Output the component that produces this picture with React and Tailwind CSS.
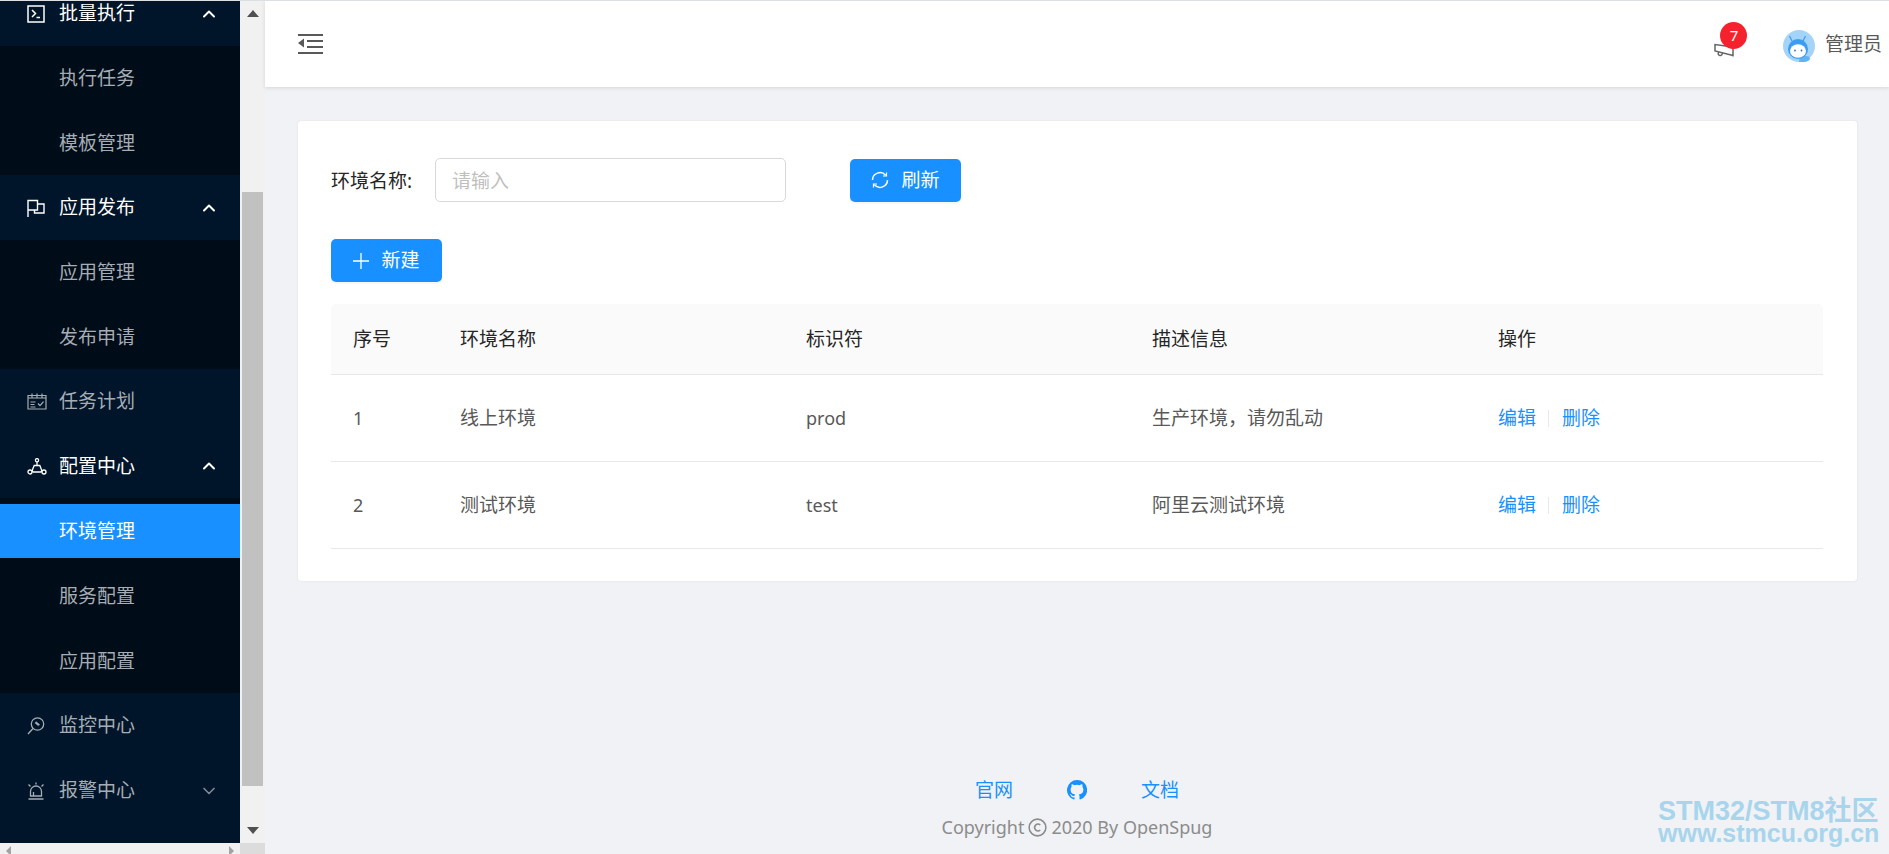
import { ChevronUp, ChevronDown } from 'lucide-react';

const font = 'font-["Noto_Sans","Noto_Sans_CJK_SC",sans-serif]';

function TerminalIcon() {
  return (
    <svg width="18" height="18" viewBox="0 0 18 18" fill="none" stroke="currentColor" strokeWidth="1.5">
      <rect x="1" y="1" width="16" height="16" />
      <path d="M5 5l3.5 3.5L5 12M9.5 12.5h3.5" />
    </svg>
  );
}

function FlagIcon() {
  return (
    <svg width="18" height="18" viewBox="0 0 18 18" fill="none" stroke="currentColor" strokeWidth="1.4">
      <path d="M1 18V1.5h9.5V11H1" />
      <path d="M10.5 5H17v9H7.5v-3" />
    </svg>
  );
}

function CalendarIcon() {
  return (
    <svg width="20" height="17" viewBox="0 0 20 17" fill="none" stroke="currentColor" strokeWidth="1.2">
      <path d="M1 2.5h18v13.5H1zM5 0.5v4M10 0.5v4M15 0.5v4M1 5h18" />
      <path d="M3.5 9h5M3.5 11.5h4M3.5 14h5M11 10.5l2 2.2 3.5-4" />
    </svg>
  );
}

function NodesIcon() {
  return (
    <svg width="20" height="17" viewBox="0 0 20 17" fill="none" stroke="currentColor" strokeWidth="1.3">
      <circle cx="10" cy="2.2" r="1.6" />
      <circle cx="3" cy="14" r="2" />
      <circle cx="17" cy="14" r="2" />
      <path d="M10 3.8V7M7.2 7.5h5.6l2 5-1 1.5H6.2l-1-1.5z" />
    </svg>
  );
}

function MonitorIcon() {
  return (
    <svg width="18" height="18" viewBox="0 0 18 18" fill="none" stroke="currentColor" strokeWidth="1.3">
      <circle cx="10.5" cy="7" r="6.2" />
      <path d="M6 11.5L1 17M8 5.5l2.5 2-.5-1.5 2.5 2" />
    </svg>
  );
}

function AlarmIcon() {
  return (
    <svg width="18" height="18" viewBox="0 0 18 18" fill="none" stroke="currentColor" strokeWidth="1.3">
      <path d="M3.5 14V9.5a5.5 5.5 0 0 1 11 0V14zM1.5 17h15M9 0.5v2M1.5 2.5L3.5 4.5M16.5 2.5L14.5 4.5M6.5 10v4" />
    </svg>
  );
}

function SubItem({ label, active }) {
  return (
    <div className={`h-[54px] flex items-center pl-[59px] ${active ? 'bg-[#1890ff] text-white' : 'text-[#a6adb4]'}`}>
      {label}
    </div>
  );
}

function MenuHead({ icon, label, open, arrow, className }) {
  return (
    <div className={`flex items-center shrink-0 ${open ? 'text-white' : 'text-[#a6adb4]'} ${className}`}>
      <span className="w-[59px] pl-[27px] flex items-center">{icon}</span>
      <span className="flex-1">{label}</span>
      {arrow === 'up' && <ChevronUp size={20} strokeWidth={2.4} className="mr-[21px]" />}
      {arrow === 'down' && <ChevronDown size={20} strokeWidth={2} className="mr-[21px] text-[#7f8a96]" />}
    </div>
  );
}

function Sidebar() {
  return (
    <div className="w-[240px] h-[842px] bg-[#001529] overflow-hidden text-[19px] flex flex-col">
      {/* list is scrolled a bit, first head is cut off at the top */}
      <MenuHead icon={<TerminalIcon />} label="批量执行" open arrow="up" className="h-[65px] mt-[-20px]" />
      <div className="bg-[#000c17] flex flex-col pt-[5px] pb-[5px] gap-[11px]">
        <SubItem label="执行任务" />
        <SubItem label="模板管理" />
      </div>
      <MenuHead icon={<FlagIcon />} label="应用发布" open arrow="up" className="h-[65px]" />
      <div className="bg-[#000c17] flex flex-col pt-[5px] pb-[5px] gap-[11px]">
        <SubItem label="应用管理" />
        <SubItem label="发布申请" />
      </div>
      <MenuHead icon={<CalendarIcon />} label="任务计划" className="h-[65px]" />
      <MenuHead icon={<NodesIcon />} label="配置中心" open arrow="up" className="h-[64px]" />
      <div className="bg-[#000c17] flex flex-col pt-[6px] pb-[5px] gap-[11px]">
        <SubItem label="环境管理" active />
        <SubItem label="服务配置" />
        <SubItem label="应用配置" />
      </div>
      <MenuHead icon={<MonitorIcon />} label="监控中心" className="h-[65px]" />
      <MenuHead icon={<AlarmIcon />} label="报警中心" arrow="down" className="h-[65px]" />
    </div>
  );
}

function VScroll() {
  return (
    <div className="w-[25px] h-[842px] bg-[#f1f1f1] flex flex-col items-center">
      <div className="h-[191px] w-full flex justify-center pt-[9px]">
        <div className="w-0 h-0 border-x-[6px] border-x-transparent border-b-[7px] border-b-[#505050]" />
      </div>
      <div className="w-[21px] h-[594px] bg-[#c1c1c1] mr-[1px]" />
      <div className="flex-1 w-full flex justify-center pt-[41px]">
        <div className="w-0 h-0 border-x-[6px] border-x-transparent border-t-[7px] border-t-[#505050]" />
      </div>
    </div>
  );
}

function HScroll() {
  return (
    <div className="h-[11px] flex">
      <div className="w-[240px] bg-[#f1f1f1] flex items-start justify-between px-[6px] pt-[3px]">
        <div className="w-0 h-0 border-y-[5px] border-y-transparent border-r-[5px] border-r-[#a3a3a3]" />
        <div className="w-0 h-0 border-y-[5px] border-y-transparent border-l-[5px] border-l-[#a3a3a3]" />
      </div>
      <div className="w-[25px] bg-[#dcdcdc]" />
    </div>
  );
}

function Header() {
  return (
    <div className="h-[86px] bg-white shadow-[0_1px_4px_rgba(0,21,41,0.12)] flex items-center pl-[33px] shrink-0 relative">
      <svg width="25" height="20" viewBox="0 0 25 20" fill="#595959">
        <rect x="0" y="0" width="25" height="2" />
        <rect x="9" y="6" width="16" height="2" />
        <rect x="9" y="12" width="16" height="2" />
        <rect x="0" y="18" width="25" height="2" />
        <path d="M6 4.5v9L0 9z" />
      </svg>
      <div className="ml-auto flex items-center">
        <div className="relative mt-[12px] mr-[49px] h-[14px]">
          <svg width="20" height="14" viewBox="0 0 20 14" fill="none" stroke="#666666" strokeWidth="1.5" className="block">
            <path d="M19 13.5V4L1 1.5v6.5l18 4.5" />
            <path d="M5 9a2 2 0 1 0 3.2 1" />
          </svg>
          <span className="absolute left-[6.5px] top-[-21px] w-[27px] h-[27px] rounded-full bg-[#f5222d] text-white text-[15px] flex items-center justify-center">7</span>
        </div>
        <svg width="32" height="32" viewBox="0 0 32 32" className="mr-[10px] mt-[4px]">
          <circle cx="16" cy="16" r="16" fill="#a5d4fb" />
          <path d="M16 32l1-6h6c2 0 4 1 4 3l-1 1.5A16 16 0 0 1 16 32z" fill="#63b3f3" />
          <path d="M9 11L6.5 6M20 11l2.5-5" stroke="#3d9cf0" strokeWidth="1.2" />
          <circle cx="15" cy="19" r="10" fill="#3d9cf0" />
          <ellipse cx="15" cy="21" rx="8" ry="6.8" fill="#ffffff" />
          <circle cx="12" cy="20.5" r="0.9" fill="#2d6fb0" />
          <circle cx="18.5" cy="20.5" r="0.9" fill="#2d6fb0" />
        </svg>
        <span className="text-[19px] text-[#595959] mr-[7px]">管理员</span>
      </div>
    </div>
  );
}

function BlueButton({ icon, label, className }) {
  return (
    <button className={`w-[111px] h-[43px] bg-[#1890ff] text-white rounded-[5px] flex items-center justify-center gap-[12px] shadow-[0_2px_0_rgba(0,0,0,0.03)] ${className}`}>
      {icon}
      {label}
    </button>
  );
}

function SyncIcon() {
  return (
    <svg width="18" height="18" viewBox="0 0 18 18" fill="none" stroke="currentColor" strokeWidth="1.5">
      <path d="M14.6 4.2A7.5 7.5 0 0 0 1.5 9M3.4 13.8A7.5 7.5 0 0 0 16.5 9" />
      <path d="M15.5 1.5v3.5h-3.5M2.5 16.5V13h3.5" strokeWidth="1.2" />
    </svg>
  );
}

function PlusIcon() {
  return (
    <svg width="16" height="16" viewBox="0 0 16 16" fill="none" stroke="currentColor" strokeWidth="1.3">
      <path d="M8 0v16M0 8h16" />
    </svg>
  );
}

const rows = [
  { id: 1, name: '线上环境', key: 'prod', desc: '生产环境，请勿乱动' },
  { id: 2, name: '测试环境', key: 'test', desc: '阿里云测试环境' },
];

function EnvTable() {
  return (
    <table className="w-full table-fixed border-collapse">
      <colgroup>
        <col className="w-[108px]" />
        <col />
        <col />
        <col />
        <col />
      </colgroup>
      <thead>
        <tr className="h-[70px] bg-[#fafafa] text-[#262626] text-left border-b border-[#e8e8e8]">
          <th className="font-normal pl-[22px] rounded-tl-[5px]">序号</th>
          <th className="font-normal pl-[21px]">环境名称</th>
          <th className="font-normal pl-[21px]">标识符</th>
          <th className="font-normal pl-[21px]">描述信息</th>
          <th className="font-normal pl-[21px] rounded-tr-[5px]">操作</th>
        </tr>
      </thead>
      <tbody>
        {rows.map((r) => (
          <tr key={r.id} className="h-[87px] text-[#595959] border-b border-[#e8e8e8]">
            <td className="pl-[22px] pt-[2px] text-[18px]">{r.id}</td>
            <td className="pl-[21px] pt-[2px]">{r.name}</td>
            <td className="pl-[21px] pt-[2px] text-[18px]">{r.key}</td>
            <td className="pl-[21px] pt-[2px]">{r.desc}</td>
            <td className="pl-[21px] pt-[1px] text-[#1890ff]">
              <div className="flex items-center">
                <span>编辑</span>
                <span className="w-px h-[17px] bg-[#e8e8e8] ml-[12px] mr-[13px]" />
                <span>删除</span>
              </div>
            </td>
          </tr>
        ))}
      </tbody>
    </table>
  );
}

function Footer() {
  return (
    <div className="flex flex-col items-center pt-[195px]">
      <div className="flex items-center text-[#1890ff] gap-[54px]">
        <span>官网</span>
        <svg width="20" height="20" viewBox="0 0 16 16" fill="currentColor">
          <path d="M8 0a8 8 0 0 0-2.53 15.59c.4.07.55-.17.55-.38v-1.34c-2.23.48-2.7-1.07-2.7-1.07-.36-.93-.89-1.17-.89-1.17-.73-.5.05-.49.05-.49.8.06 1.23.83 1.23.83.71 1.22 1.87.87 2.33.66.07-.52.28-.87.5-1.07-1.77-.2-3.64-.89-3.64-3.95 0-.87.31-1.59.82-2.15-.08-.2-.36-1.01.08-2.12 0 0 .67-.21 2.2.82a7.6 7.6 0 0 1 4 0c1.53-1.04 2.2-.82 2.2-.82.44 1.11.16 1.92.08 2.12.51.56.82 1.27.82 2.15 0 3.07-1.87 3.75-3.65 3.95.29.25.54.73.54 1.48v2.2c0 .21.15.46.55.38A8 8 0 0 0 8 0z" />
        </svg>
        <span>文档</span>
      </div>
      <div className="flex items-center text-[#8c8c8c] mt-[9px] gap-[4px] text-[18px]">
        <span>Copyright</span>
        <svg width="19" height="19" viewBox="0 0 17 17" fill="none" stroke="currentColor" strokeWidth="1.4">
          <circle cx="8.5" cy="8.5" r="7.5" />
          <path d="M11 6.3a3 3 0 1 0 0 4.4" />
        </svg>
        <span>2020 By OpenSpug</span>
      </div>
    </div>
  );
}

export default function App() {
  return (
    <div className={`relative w-screen h-screen overflow-hidden bg-[#f0f2f5] border-t border-[#dcdfe4] flex text-[19px] ${font}`}>
      <div className="w-[265px] shrink-0 flex flex-col">
        <div className="flex">
          <Sidebar />
          <VScroll />
        </div>
        <HScroll />
      </div>
      <div className="flex-1 flex flex-col min-w-0">
        <Header />
        <div className="ml-[33px] mr-[32px] mt-[34px] h-[460px] bg-white rounded-[3px] shadow-[0_0_2px_rgba(0,0,0,0.1)] pl-[33px] pr-[34px] pt-[37px] shrink-0">
          <div className="flex items-center h-[44px]">
            <label className="text-[#262626] w-[104px] pt-[2px]">环境名称:</label>
            <div className="w-[351px] h-[44px] border border-[#d9d9d9] rounded-[5px] flex items-center pl-[16px] pt-[2px] text-[#bfbfbf]">请输入</div>
            <BlueButton icon={<SyncIcon />} label="刷新" className="ml-[64px]" />
          </div>
          <BlueButton icon={<PlusIcon />} label="新建" className="mt-[37px]" />
          <div className="mt-[22px]">
            <EnvTable />
          </div>
        </div>
        <Footer />
      </div>
      <div className="absolute left-[1658px] top-[799px] font-bold text-[#a8d5ec] font-['Liberation_Sans','Noto_Sans_CJK_SC',sans-serif]">
        <div className="text-[27px] leading-[22px]">STM32/STM8社区</div>
        <div className="text-[25px] leading-[22px]">www.stmcu.org.cn</div>
      </div>
    </div>
  );
}
